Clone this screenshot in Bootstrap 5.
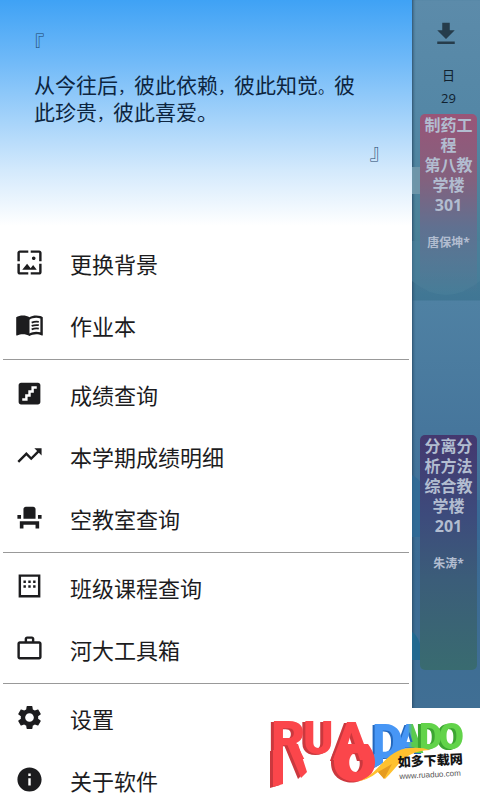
<!DOCTYPE html>
<html lang="zh-CN">
<head>
<meta charset="utf-8">
<meta name="viewport" content="width=device-width, initial-scale=1">
<title>课程表</title>
<link href="https://cdn.jsdelivr.net/npm/bootstrap@5.3.0/dist/css/bootstrap.min.css" rel="stylesheet">
<style>
body { font-family: "Noto Sans CJK SC", sans-serif; color: #1c1c1e; background: #fff; }
.app-screen { height: 100vh; }
.drawer { flex: 0 0 auto; width: calc(100% - 68px); background: #fff; }
.quote-head { height: 232px; padding: 30px 32px 0 34px; color: #0d2540;
  background: linear-gradient(#3fa2f5 0, #6fb9f8 60px, #a5d3fa 120px, #d3e9fc 170px, #fff 226px); }
.quote-mark { font-size: 21px; line-height: 24px; color: #1d4368; font-weight: 300; font-feature-settings: "halt"; }
.quote-text { font-size: 21px; line-height: 27px; margin: 17px 0 13px; padding-right: 16px; }
.punct { font-size: 16px; line-height: 16px; }
.menu-row { height: 62px; padding: 0 15px 1px; gap: 26px; font-size: 22px; line-height: 30px; color: #1c1c1e; }
.menu-row svg { width: 29px; height: 29px; fill: currentColor; flex: none; }
.menu-rule { height: 1px; margin: 3px; background: #999; opacity: 1; border: 0; }
.timetable { height: calc(100% - 92px); min-width: 0; padding: 19px 3px 0 8px; color: #16293b;
  background: linear-gradient(#5c8baa 0, #5487a6 110px, #4a8198 230px, #407694 300px, #4f81a3 301px, #46769c 430px, #3b6b94 560px, #406f94 708px);
  box-shadow: inset 3px 0 3px -2px #294d69; }
.backdrop { inset: 0; }
.dl-btn { width: 30px; height: 30px; color: #263c4b; background: none; margin-right: 6px; }
.day { font-family: "Open Sans", "Noto Sans CJK SC", sans-serif; font-size: 13px; line-height: 23px; margin: 10px 0 4px; color: #10212f; }
.course { font-family: "Open Sans", "Noto Sans CJK SC", sans-serif; font-weight: 700; font-size: 16px; line-height: 20px; color: #b2bdd0; border-radius: 5px; padding: 1px 4px; text-align: center; }
.course p { margin: 0 0 18px; }
.course small { display: block; font-size: 12px; white-space: nowrap; }
.course-a { height: 186px; background: linear-gradient(#995578 0, #83617e 65px, #5f7191 115px, #4f7f9800 180px); }
.course-b { height: 235px; margin-top: 135px; background: linear-gradient(#44386f 0, #3d4b7c 80px, #3b5d79 145px, #396b70 235px); }
.sitemark { right: 0; bottom: 0; width: 215px; height: 92px; background: #fff; }
.cn { font: 900 13px "Noto Sans CJK SC", sans-serif; fill: #151515; }
.url { font: 8px "Liberation Sans", sans-serif; fill: #555; }
.logo-letter { font-family: Roboto, sans-serif; font-weight: 900; }
.red-part { fill: #fb464b; filter: drop-shadow(-3px 1px 0 #cb383e); }
.blue-part { fill: #4796f5; filter: drop-shadow(-2px 1px 0 #2468bd); }
.green-part { fill: #62d34a; filter: drop-shadow(-3px 1px 0 #3ca632); }
</style>
</head>
<body>
<div class="app-screen d-flex position-relative overflow-hidden">
  <nav class="drawer" aria-label="菜单">
    <header class="quote-head d-flex flex-column">
      <span class="quote-mark align-self-start">『</span>
      <p class="quote-text">从今往后<span class="punct">，</span>彼此依赖<span class="punct">，</span>彼此知觉<span class="punct">。</span>彼此珍贵<span class="punct">，</span>彼此喜爱。</p>
      <span class="quote-mark align-self-end">』</span>
    </header>
    <a href="#" class="menu-row d-flex align-items-center text-decoration-none"><svg viewBox="0 0 24 24"><path d="M4 4h7V2H4c-1.100 0-2 .9-2 2v7h2V4zm6 9l-4 5h12l-3-4-2.030 2.710L10 13zm7-4.500c0-.83-.67-1.500-1.500-1.500S14 7.670 14 8.500s.67 1.500 1.500 1.500S17 9.330 17 8.500zM20 2h-7v2h7v7h2V4c0-1.100-.9-2-2-2zm0 18h-7v2h7c1.100 0 2-.9 2-2v-7h-2v7zM4 13H2v7c0 1.100.9 2 2 2h7v-2H4v-7z"/></svg>更换背景</a>
    <a href="#" class="menu-row d-flex align-items-center text-decoration-none"><svg viewBox="0 0 24 24"><path fill-rule="evenodd" d="M21 5c-1.110-.35-2.330-.5-3.500-.5-1.950 0-4.050.4-5.500 1.500-1.450-1.100-3.550-1.500-5.500-1.500S2.450 4.900 1 6v14.650c0 .25.25.5.5.5.1 0 .15-.05.25-.05C3.100 20.450 5.050 20 6.500 20c1.950 0 4.050.4 5.500 1.500 1.350-.85 3.800-1.500 5.500-1.500 1.650 0 3.350.3 4.750 1.050.1.05.15.05.25.05.25 0 .5-.25.5-.5V6c-.6-.45-1.250-.75-2-1zm0 13.500c-1.100-.35-2.300-.5-3.500-.5-1.700 0-4.150.65-5.500 1.500V8c1.350-.85 3.800-1.500 5.500-1.500 1.200 0 2.400.15 3.500.5v11.500z"/><path fill="none" stroke="currentColor" stroke-width="1.500" d="M13.800 10.400q2.800-1.100 5.900-.6M13.800 13.200q2.800-1.100 5.900-.6M13.800 16q2.800-1.100 5.900-.6"/></svg>作业本</a>
    <hr class="menu-rule">
    <a href="#" class="menu-row d-flex align-items-center text-decoration-none"><svg viewBox="0 0 24 24"><path d="M19 3H5c-1.100 0-2 .9-2 2v14c0 1.100.9 2 2 2h14c1.100 0 2-.9 2-2V5c0-1.100-.9-2-2-2zm-1 5h-2.420v3.330H13v3.330h-2.580V18H6v-2h2.420v-3.330H11V9.330h2.580V6H18v2z"/></svg>成绩查询</a>
    <a href="#" class="menu-row d-flex align-items-center text-decoration-none"><svg viewBox="0 0 24 24"><path d="M16 6l2.290 2.290-4.880 4.880-4-4L2 16.590 3.410 18l6-6 4 4 6.300-6.290L22 12V6z"/></svg>本学期成绩明细</a>
    <a href="#" class="menu-row d-flex align-items-center text-decoration-none"><svg viewBox="0 0 24 24"><path d="M4 18v3h3v-3h10v3h3v-6H4zm15-8h3v3h-3zM2 10h3v3H2zm15 3H7V5c0-1.100.9-2 2-2h6c1.100 0 2 .9 2 2v8z"/></svg>空教室查询</a>
    <hr class="menu-rule">
    <a href="#" class="menu-row d-flex align-items-center text-decoration-none"><svg viewBox="0 0 24 24"><path fill="none" stroke="currentColor" stroke-width="2" d="M4 3h16v17H4z"/><path d="M7 7h2v2H7zm4 0h2v2h-2zm4 0h2v2h-2zM7 11h2v2H7zm4 0h2v2h-2zm4 0h2v2h-2z"/></svg>班级课程查询</a>
    <a href="#" class="menu-row d-flex align-items-center text-decoration-none"><svg viewBox="0 0 24 24"><path fill-rule="evenodd" d="M14 6V4h-4v2h4zM4 8v11h16V8H4zm16-2c1.110 0 2 .89 2 2v11c0 1.110-.89 2-2 2H4c-1.110 0-2-.89-2-2V8c0-1.110.89-2 2-2h4V4c0-1.110.89-2 2-2h4c1.110 0 2 .89 2 2v2h4z"/></svg>河大工具箱</a>
    <hr class="menu-rule">
    <a href="#" class="menu-row d-flex align-items-center text-decoration-none"><svg viewBox="0 0 24 24"><path d="M19.140 12.940c.04-.3.06-.61.06-.94 0-.32-.02-.64-.07-.94l2.030-1.580c.18-.14.23-.41.12-.61l-1.920-3.320c-.12-.22-.37-.29-.59-.22l-2.390.96c-.5-.38-1.030-.7-1.620-.94l-.36-2.540c-.04-.24-.24-.41-.48-.41h-3.840c-.24 0-.43.17-.47.41l-.36 2.540c-.59.24-1.130.57-1.620.94l-2.390-.96c-.22-.08-.47 0-.59.22L2.740 8.870c-.12.21-.08.47.12.61l2.030 1.580c-.05.3-.09.63-.09.94s.02.64.07.94l-2.030 1.580c-.18.14-.23.41-.12.61l1.920 3.320c.12.22.37.29.59.22l2.390-.96c.5.38 1.030.7 1.620.94l.36 2.540c.05.24.24.41.48.41h3.840c.24 0 .44-.17.47-.41l.36-2.540c.59-.24 1.130-.56 1.620-.94l2.390.96c.22.08.47 0 .59-.22l1.920-3.320c.12-.22.07-.47-.12-.61l-2.010-1.580zM12 15.600c-1.980 0-3.600-1.620-3.600-3.600s1.620-3.600 3.600-3.600 3.600 1.620 3.600 3.600-1.620 3.600-3.600 3.600z"/></svg>设置</a>
    <a href="#" class="menu-row d-flex align-items-center text-decoration-none"><svg viewBox="0 0 24 24"><path d="M12 2C6.480 2 2 6.480 2 12s4.480 10 10 10 10-4.480 10-10S17.520 2 12 2zm1 15h-2v-6h2v6zm0-8h-2V7h2v2z"/></svg>关于软件</a>
  </nav>

  <main class="timetable flex-grow-1 position-relative">
    <svg class="backdrop position-absolute w-100 h-100" viewBox="0 0 68 708" preserveAspectRatio="none" aria-hidden="true">
      <path fill="#6d95a9" d="M0 167h8v27H0z"/>
      <path fill="#4b819c" d="M0 281q34 28 68 0v-40H0z" opacity=".5"/>
      <path fill="#2c6995" d="M0 475q12 6 12 20v42H0z" opacity=".7"/>
      <path fill="#356796" d="M60 500h8v40h-8z" opacity=".6"/>
      <path fill="#226990" d="M0 632q8 4 12 28H0z"/>
    </svg>
    <div class="position-relative">
      <div class="text-center"><button type="button" class="dl-btn border-0 p-0" aria-label="下载"><svg width="30" height="30" viewBox="0 0 24 24" fill="currentColor" class="d-block"><path d="M19 9h-4V3H9v6H5l7 7 7-7zM5 18v2h14v-2H5z"/></svg></button></div>
      <div class="day text-center">日<br>29</div>
      <article class="course course-a"><p>制药工程<br>第八教学楼301</p><small>唐保坤*</small></article>
      <article class="course course-b"><p>分离分析方法<br>综合教学楼201</p><small>朱涛*</small></article>
    </div>
  </main>

  <aside class="sitemark position-absolute">
    <svg width="215" height="92" viewBox="265 708 215 92" role="img" aria-label="如多下载网">
      <defs><linearGradient id="blueGreen"><stop offset=".45" stop-color="#4796f5"/><stop offset=".6" stop-color="#5bcb4d"/></linearGradient></defs>
      <g class="logo-letter">
        <g class="blue-part">
          <text x="372" y="758" font-size="48">D</text>
          <path d="M374 754h9v9l-9 5z"/>
          <text x="396" y="753" font-size="40" fill="url(#blueGreen)">A</text>
        </g>
        <g class="green-part">
          <text x="419" y="749" font-size="36">D</text>
          <text x="439" y="749" font-size="36">O</text>
        </g>
        <g class="red-part">
          <text x="271" y="759" font-size="53">R</text>
          <path d="M273 750h10v34l-10 3zM287 744h11l9 28-6 6z"/>
          <text x="303" y="754" font-size="46">U</text>
          <text x="333" y="760" font-size="54">A</text>
          <path fill-rule="evenodd" d="M341 744c-6 8-7 13-7 18 0 26 41 26 41 0 0-6-2-11-7-18zM356 753c9 0 9 19 0 19s-9-19 0-19z"/>
        </g>
      </g>
      <path fill="#ffc12f" d="M354 782c23-2 30-33 56-34q12-1 20 2c-27 1-32 17-45 29l-7-7q-11 9-24 10z"/>
      <path fill="#e69c20" d="M378 772l14-8-8 15z"/>
      <g transform="rotate(-3 399 768)"><text class="cn" x="398" y="767">如多下载网</text><text class="url" x="399" y="779">www.ruaduo.com</text></g>
    </svg>
  </aside>
</div>
<script src="https://cdn.jsdelivr.net/npm/bootstrap@5.3.0/dist/js/bootstrap.bundle.min.js"></script>
</body>
</html>
